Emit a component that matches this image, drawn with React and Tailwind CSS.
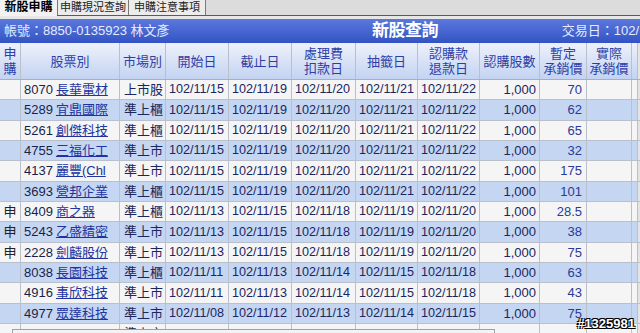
import React from "react";

const rows = [
  { s: "", code: "8070", name: "長華電材", mkt: "上市股", d: ["102/11/15", "102/11/19", "102/11/20", "102/11/21", "102/11/22"], p: "70" },
  { s: "", code: "5289", name: "宜鼎國際", mkt: "準上櫃", d: ["102/11/15", "102/11/19", "102/11/20", "102/11/21", "102/11/22"], p: "62" },
  { s: "", code: "5261", name: "創傑科技", mkt: "準上櫃", d: ["102/11/15", "102/11/19", "102/11/20", "102/11/21", "102/11/22"], p: "65" },
  { s: "", code: "4755", name: "三福化工", mkt: "準上市", d: ["102/11/15", "102/11/19", "102/11/20", "102/11/21", "102/11/22"], p: "32" },
  { s: "", code: "4137", name: "麗豐(Chl", mkt: "準上市", d: ["102/11/15", "102/11/19", "102/11/20", "102/11/21", "102/11/22"], p: "175" },
  { s: "", code: "3693", name: "營邦企業", mkt: "準上櫃", d: ["102/11/15", "102/11/19", "102/11/20", "102/11/21", "102/11/22"], p: "101" },
  { s: "申", code: "8409", name: "商之器", mkt: "準上櫃", d: ["102/11/13", "102/11/15", "102/11/18", "102/11/19", "102/11/20"], p: "28.5" },
  { s: "申", code: "5243", name: "乙盛精密", mkt: "準上市", d: ["102/11/13", "102/11/15", "102/11/18", "102/11/19", "102/11/20"], p: "38" },
  { s: "申", code: "2228", name: "劍麟股份", mkt: "準上市", d: ["102/11/13", "102/11/15", "102/11/18", "102/11/19", "102/11/20"], p: "75" },
  { s: "", code: "8038", name: "長園科技", mkt: "準上櫃", d: ["102/11/11", "102/11/13", "102/11/14", "102/11/15", "102/11/18"], p: "63" },
  { s: "", code: "4916", name: "事欣科技", mkt: "準上市", d: ["102/11/11", "102/11/13", "102/11/14", "102/11/15", "102/11/18"], p: "43" },
  { s: "", code: "4977", name: "眾達科技", mkt: "準上市", d: ["102/11/08", "102/11/12", "102/11/13", "102/11/14", "102/11/15"], p: "75" },
];

const grid =
  "grid grid-cols-[21px_99px_46px_63px_63px_64px_62px_62px_60px_47px_45px_6px_2px]";

const cell = "border-r border-[#b9c0cc] flex items-center overflow-hidden whitespace-nowrap";

export default function App() {
  const font = { fontFamily: '"Liberation Sans", "Noto Sans CJK TC", sans-serif' };
  return (
    <div
      className="relative w-[640px] h-[333px] overflow-hidden bg-[#e4e4e4]"
      style={font}
    >
      {/* tabs */}
      <div className="flex h-[16px] bg-[#dcdcdc] border-b border-[#5a5a5a] text-[11px] leading-[15px]">
        <div className="w-[57px] bg-[#f2f2f2] font-bold text-[12px] text-black flex items-center justify-center -mb-px border-b border-[#f2f2f2]">
          新股申購
        </div>
        <div className="w-[71px] bg-[#ececec] border-l border-[#7a7a7a] text-[#222] flex items-center justify-center">
          申購現況查詢
        </div>
        <div className="w-[78px] bg-[#ececec] border-l border-r border-[#7a7a7a] text-[#222] flex items-center justify-center">
          申購注意事項
        </div>
      </div>
      <div className="h-[3px] bg-[#e6e6e6]" />

      {/* blue title bar */}
      <div className="h-[24px] bg-gradient-to-b from-[#5b78dc] to-[#3353c4] flex items-center relative">
        <div className="pl-[4px] text-[13px] text-[#e6ebff]">帳號：8850-0135923 林文彥</div>
        <div className="absolute left-[372px] top-0 h-full flex items-center text-[17px] font-bold text-white tracking-[-0.5px]">
          新股查詢
        </div>
        <div className="ml-auto text-[13px] text-[#e6ebff] whitespace-nowrap pr-[1px]">交易日：102/</div>
      </div>

      {/* header row */}
      <div
        className={`${grid} h-[37px] bg-gradient-to-b from-[#eef1fb] to-[#c3d3f1] border-b border-[#9fb0d6] text-[#2d3fa6] text-[13px] leading-[15px]`}
      >
        <div className={`${cell} justify-center text-center border-[#aebbe0]`}>申<br />購</div>
        <div className={`${cell} justify-center border-[#aebbe0]`}>股票別</div>
        <div className={`${cell} justify-center border-[#aebbe0]`}>市場別</div>
        <div className={`${cell} justify-center border-[#aebbe0]`}>開始日</div>
        <div className={`${cell} justify-center border-[#aebbe0]`}>截止日</div>
        <div className={`${cell} justify-center text-center border-[#aebbe0]`}>處理費<br />扣款日</div>
        <div className={`${cell} justify-center border-[#aebbe0]`}>抽籤日</div>
        <div className={`${cell} justify-center text-center border-[#aebbe0]`}>認購款<br />退款日</div>
        <div className={`${cell} justify-center border-[#aebbe0]`}>認購股數</div>
        <div className={`${cell} justify-center text-center border-[#aebbe0]`}>暫定<br />承銷價</div>
        <div className={`${cell} justify-center text-center border-[#aebbe0]`}>實際<br />承銷價</div>
        <div className={`${cell} border-[#aebbe0]`} />
        <div className="bg-[#e4e4e4]" />
      </div>

      {/* data rows */}
      {rows.map((r, i) => (
        <div
          key={r.code}
          className={`${grid} h-[20.33px] border-b border-[#b9c0cc] text-[13px] text-[#1b2560] ${
            i % 2 === 1 ? "bg-[#c4d6f2]" : "bg-[#f5f5f5]"
          }`}
        >
          <div className={`${cell} justify-center text-[#222]`}>{r.s}</div>
          <div className={`${cell} pl-[3px] gap-[3px]`}>
            <span className="text-[#1a1f4a]">{r.code}</span>
            <span className="underline text-[#2233a0]">{r.name}</span>
          </div>
          <div className={`${cell} pl-[4px]`}>{r.mkt}</div>
          {r.d.map((d, j) => (
            <div key={j} className={`${cell} pl-[3px] text-[12.6px]`}>{d}</div>
          ))}
          <div className={`${cell} justify-end pr-[3px]`}>1,000</div>
          <div className={`${cell} justify-end pr-[4px] text-[#2b3a98]`}>{r.p}</div>
          <div className={cell} />
          <div className={cell} />
          <div className="bg-[#e4e4e4]" />
        </div>
      ))}
      <div className={`${grid} h-[20px] bg-[#f5f5f5] text-[13px] text-[#1b2560]`}>
        <div className={cell} />
        <div className={cell} />
        <div className={`${cell} pl-[4px] items-start`}>準上市</div>
        <div className={cell} />
        <div className={cell} />
        <div className={cell} />
        <div className={cell} />
        <div className={cell} />
        <div className={cell} />
        <div className={cell} />
        <div className={cell} />
        <div className={cell} />
        <div className="bg-[#e4e4e4]" />
      </div>

      {/* bottom status box */}
      <div className="absolute left-[12px] top-[329px] w-[483px] h-[10px] bg-[#f3f3f3] border border-[#a0a0a0]" />

      {/* watermark */}
      <div className="absolute right-[5px] top-[317px] text-[13px] font-bold text-white leading-[14px] [text-shadow:-1px_-1px_0_#000,1px_-1px_0_#000,-1px_1px_0_#000,1px_1px_0_#000]">
        #1325981
      </div>
    </div>
  );
}
